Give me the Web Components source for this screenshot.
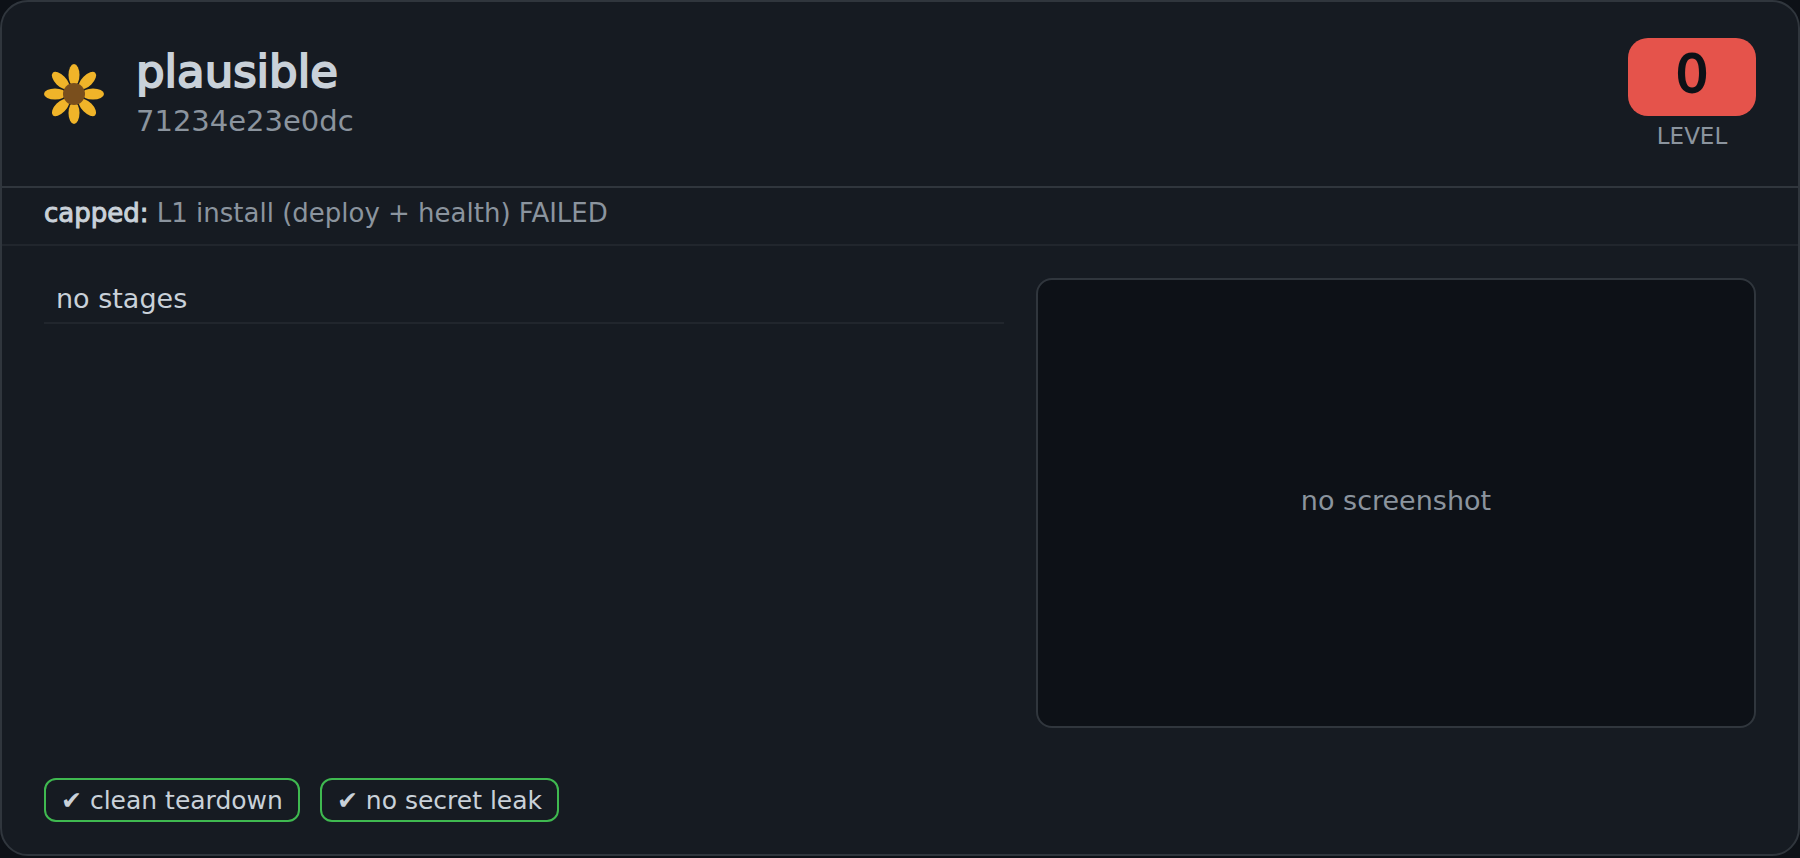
<!DOCTYPE html>
<html lang="en">
<head>
<meta charset="utf-8">
<meta name="viewport" content="width=device-width, initial-scale=1">
<title>plausible</title>
<style>
:root {
    --bg: #0d1117;
    --surface: #161b22;
    --border: #30363d;
    --border-soft: #21262d;
    --text: #c9d1d9;
    --muted: #8b949e;
    --pass: #3fb950;
    --fail: #e5534b;
    --gutter: 42px;
}

body {
    margin: 0;
    background: var(--bg);
    color: var(--text);
    font-family: "DejaVu Sans", sans-serif;
    font-size: 27px;
}
</style>
</head>
<body>

<report-card>
    <report-header slot="header" name="plausible" commit="71234e23e0dc">
        <level-badge level="0"></level-badge>
    </report-header>
    <cap-note slot="note" label="capped:">L1 install (deploy + health) FAILED</cap-note>
    <stage-table></stage-table>
    <shot-frame>no screenshot</shot-frame>
    <check-pill slot="footer">clean teardown</check-pill>
    <check-pill slot="footer">no secret leak</check-pill>
</report-card>

<script>
(function () {
    "use strict";

    class BaseElement extends HTMLElement {
        constructor() {
            super();
            this.attachShadow({ mode: "open" });
        }

        connectedCallback() {
            this.shadowRoot.innerHTML = this.render();
        }
    }

    class ReportCard extends BaseElement {
        render() {
            return `
<style>
:host {
    display: block;
    box-sizing: border-box;
    border: 2px solid var(--border);
    border-radius: 28px;
    background: var(--surface);
    overflow: hidden;
}

main {
    display: grid;
    grid-template-columns: 4fr 3fr;
    align-items: start;
    gap: 32px;
    padding: 32px var(--gutter) 50px;
}

footer {
    display: flex;
    flex-wrap: wrap;
    gap: 20px;
    padding: 0 var(--gutter) 32px;
}
</style>
<slot name="header"></slot>
<slot name="note"></slot>
<main><slot></slot></main>
<footer><slot name="footer"></slot></footer>
`;
        }
    }

    class ReportHeader extends BaseElement {
        render() {
            return `
<style>
:host {
    display: block;
    border-bottom: 2px solid var(--border);
}

header {
    display: flex;
    align-items: center;
    gap: 32px;
    padding: 36px var(--gutter);
}

.title {
    flex: 1;
    min-width: 0;
}

h1 {
    margin: 0;
    font-size: 45px;
    font-weight: 400;
    line-height: 54px;
    -webkit-text-stroke: 2px;
}

p {
    margin: 0;
    color: var(--muted);
    font-size: 29px;
    line-height: 44px;
}
</style>
<header>
    <flower-icon></flower-icon>
    <div class="title">
        <h1>${this.getAttribute("name")}</h1>
        <p>${this.getAttribute("commit")}</p>
    </div>
    <slot></slot>
</header>
`;
        }
    }

    class FlowerIcon extends BaseElement {
        render() {
            let petals = "";

            for (let angle = 0; angle < 360; angle += 45) {
                petals += `<ellipse cx="30" cy="11" rx="5.5" ry="11" transform="rotate(${angle} 30 30)"/>`;
            }

            return `
<style>
:host {
    display: block;
    flex: none;
}

svg {
    display: block;
    width: 60px;
    height: 60px;
}
</style>
<svg viewBox="0 0 60 60" aria-hidden="true">
    <g fill="#f0b429">${petals}</g>
    <circle cx="30" cy="30" r="11" fill="#7a4f1d"/>
</svg>
`;
        }
    }

    class LevelBadge extends BaseElement {
        render() {
            return `
<style>
:host {
    display: block;
    flex: none;
    text-align: center;
}

.value {
    box-sizing: border-box;
    min-width: 128px;
    padding: 10px 16px 16px;
    border-radius: 20px;
    background: var(--fail);
    color: var(--bg);
    font-size: 52px;
    line-height: 52px;
    -webkit-text-stroke: 2px;
}

.label {
    margin-top: 6px;
    color: var(--muted);
    font-size: 23px;
    line-height: 28px;
}
</style>
<div class="value">${this.getAttribute("level")}</div>
<div class="label">LEVEL</div>
`;
        }
    }

    class CapNote extends BaseElement {
        render() {
            return `
<style>
:host {
    display: block;
    padding: 10px var(--gutter) 16px;
    border-bottom: 2px solid var(--border-soft);
    color: var(--muted);
    font-size: 26px;
    line-height: 30px;
}

b {
    color: var(--text);
    font-weight: 400;
    -webkit-text-stroke: 1px;
}
</style>
<b>${this.getAttribute("label")}</b> <slot></slot>
`;
        }
    }

    class StageTable extends BaseElement {
        render() {
            return `
<style>
:host {
    display: block;
}

table {
    width: 100%;
    border-collapse: separate;
    border-spacing: 0;
}

td {
    padding: 5px 12px 7px;
    border-bottom: 2px solid var(--border-soft);
    color: var(--text);
    font-size: 27px;
    line-height: 32px;
}
</style>
<table><tbody><tr><td>no stages</td></tr></tbody></table>
`;
        }
    }

    class ShotFrame extends BaseElement {
        render() {
            return `
<style>
:host {
    display: flex;
    align-items: center;
    justify-content: center;
    box-sizing: border-box;
    aspect-ratio: 16 / 10;
    padding-bottom: 4px;
    border: 2px solid var(--border);
    border-radius: 16px;
    background: var(--bg);
    color: var(--muted);
    font-size: 27px;
    line-height: 32px;
}
</style>
<slot></slot>
`;
        }
    }

    class CheckPill extends BaseElement {
        render() {
            return `
<style>
:host {
    display: block;
    padding: 6px 15px 4px;
    border: 2px solid var(--pass);
    border-radius: 12px;
    font-size: 25px;
    line-height: 30px;
}
</style>
&#10004; <slot></slot>
`;
        }
    }

    customElements.define("flower-icon", FlowerIcon);
    customElements.define("level-badge", LevelBadge);
    customElements.define("report-header", ReportHeader);
    customElements.define("cap-note", CapNote);
    customElements.define("stage-table", StageTable);
    customElements.define("shot-frame", ShotFrame);
    customElements.define("check-pill", CheckPill);
    customElements.define("report-card", ReportCard);
})();
</script>
</body>
</html>
